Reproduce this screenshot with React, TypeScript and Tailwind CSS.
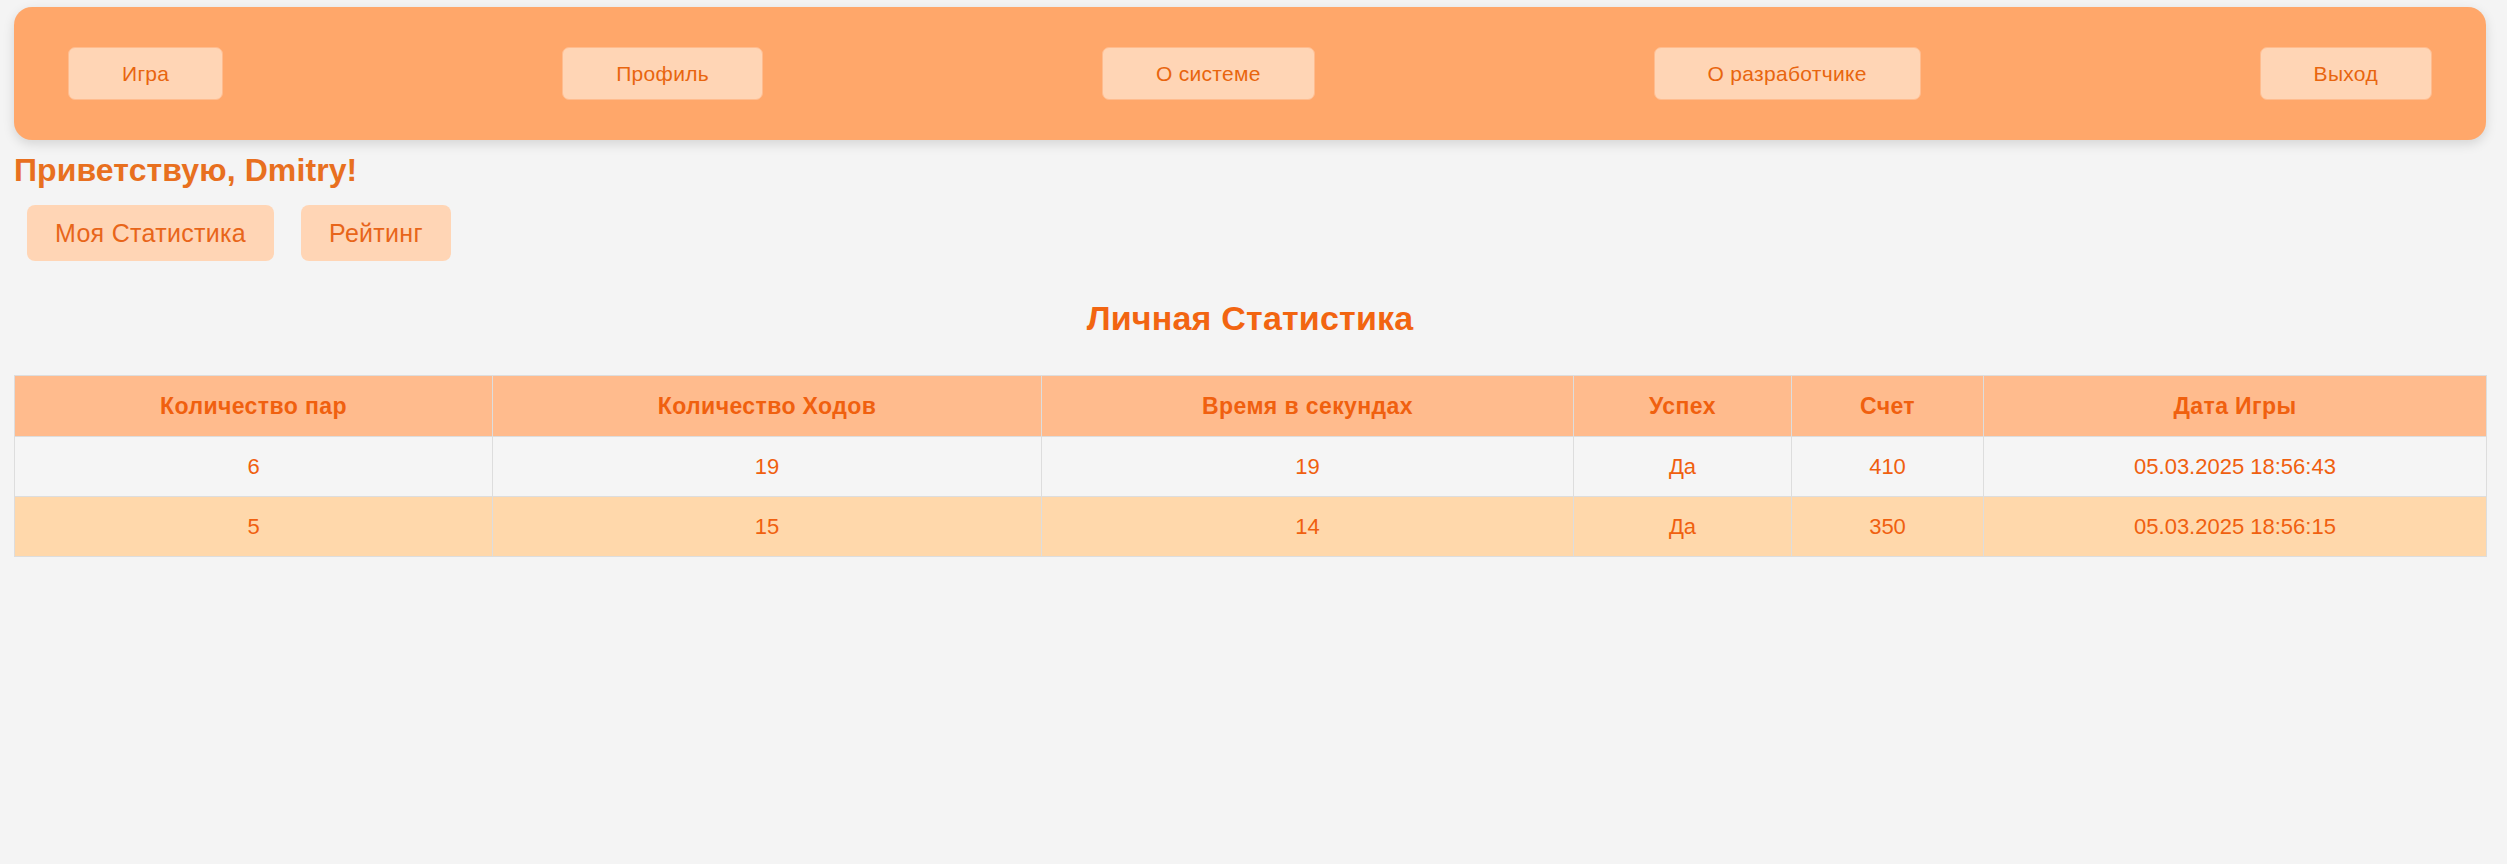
import React from 'react';

const navItems = ['Игра', 'Профиль', 'О системе', 'О разработчике', 'Выход'];

const columns = [
    { title: 'Количество пар', width: 'w-[478px]' },
    { title: 'Количество Ходов', width: 'w-[549px]' },
    { title: 'Время в секундах', width: 'w-[532px]' },
    { title: 'Успех', width: 'w-[218px]' },
    { title: 'Счет', width: 'w-[192px]' },
    { title: 'Дата Игры', width: 'w-[503px]' },
];

const games = [
    { pairs: 6, moves: 19, seconds: 19, success: 'Да', score: 410, date: '05.03.2025 18:56:43' },
    { pairs: 5, moves: 15, seconds: 14, success: 'Да', score: 350, date: '05.03.2025 18:56:15' },
];

export default function App() {
    return (
        <div
            className="min-h-screen bg-[#f4f4f4] pl-[14px] pr-[21px] pt-[7px]"
            style={{ fontFamily: '"Liberation Sans", Arial, sans-serif' }}
        >
            {/* Top navigation */}
            <header className="flex items-center justify-between rounded-[18px] bg-[#ffa76a] px-[54px] py-[40px] shadow-[0_4px_12px_rgba(0,0,0,0.13)]">
                {navItems.map((item) => (
                    <button
                        key={item}
                        className="rounded-[7px] border border-[#ffbc8e] bg-[#ffd5b5] px-[53px] py-[14px] text-[21px] leading-[23px] tracking-[0.3px] text-[#e8650f]"
                    >
                        {item}
                    </button>
                ))}
            </header>

            <h1 className="mt-[12px] text-[32px] font-bold leading-[37px] tracking-[0.1px] text-[#e8701f]">
                Приветствую, Dmitry!
            </h1>

            {/* Tabs */}
            <div className="ml-[13px] mt-[16px] flex gap-[27px]">
                <button className="rounded-[8px] bg-[#ffd5b5] px-[28px] py-[14px] text-[25px] leading-[28px] tracking-[0.3px] text-[#e8651a]">
                    Моя Статистика
                </button>
                <button className="rounded-[8px] bg-[#ffd5b5] px-[28px] py-[14px] text-[25px] leading-[28px] tracking-[0.3px] text-[#e8651a]">
                    Рейтинг
                </button>
            </div>

            <h2 className="mt-[38px] text-center text-[34px] font-bold leading-[39px] tracking-[0.2px] text-[#f26511]">
                Личная Статистика
            </h2>

            <table className="mt-[37px] w-full table-fixed border-collapse text-center">
                <thead>
                    <tr className="bg-[#ffbb8d]">
                        {columns.map((col) => (
                            <th
                                key={col.title}
                                className={`${col.width} h-[61px] border border-[#dddddd] p-0 text-[23px] font-bold tracking-[0.4px] text-[#f0600f]`}
                            >
                                {col.title}
                            </th>
                        ))}
                    </tr>
                </thead>
                <tbody>
                    {games.map((g, i) => (
                        <tr key={g.date} className={i % 2 === 0 ? 'bg-[#f5f5f5]' : 'bg-[#ffd8ab]'}>
                            {[g.pairs, g.moves, g.seconds, g.success, g.score, g.date].map((v, j) => (
                                <td key={j} className="h-[60px] border border-[#dddddd] p-0 text-[22px] text-[#f0600f]">
                                    {v}
                                </td>
                            ))}
                        </tr>
                    ))}
                </tbody>
            </table>
        </div>
    );
}
